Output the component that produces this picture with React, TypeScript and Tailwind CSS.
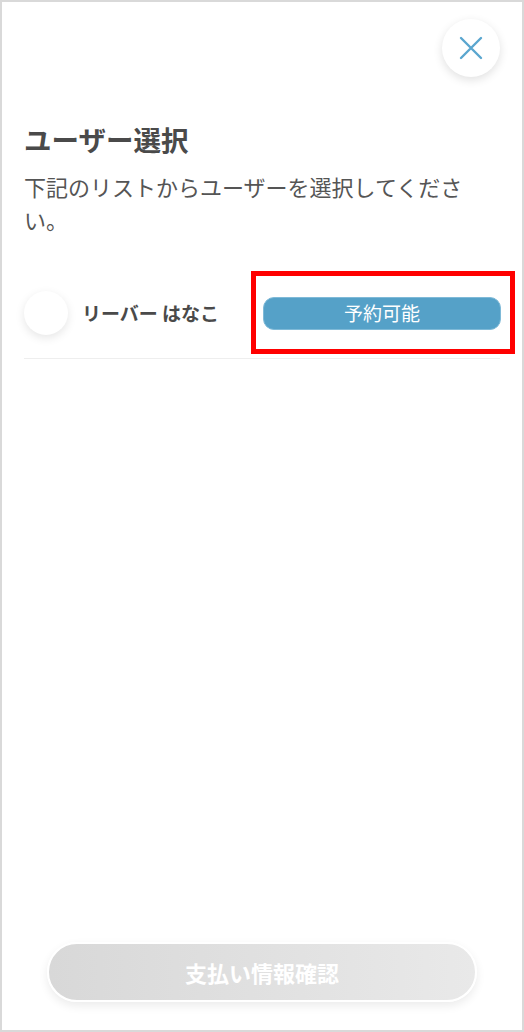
import React from 'react';

const font = { fontFamily: '"Noto Sans CJK JP", "Noto Sans", sans-serif' };

export default function App() {
  return (
    <div className="relative w-[524px] h-[1032px] bg-white border-2 border-[#d9d9d9] flex flex-col" style={font}>
      <div className="flex justify-end pt-[17px] pr-[22px]">
        <button className="w-[58px] h-[58px] rounded-full bg-white shadow-[0_3px_10px_rgba(0,0,0,0.12)] flex items-center justify-center">
          <svg width="24" height="24" viewBox="0 0 24 24" fill="none" stroke="#5aa6cf" strokeWidth="2.4" strokeLinecap="round">
            <path d="M2 2 L22 22 M22 2 L2 22" />
          </svg>
        </button>
      </div>

      <div className="px-[22px] mt-[44px]">
        <h1 className="text-[27.5px] leading-[36px] font-bold text-[#4a4a4a]">ユーザー選択</h1>
        <p className="mt-[13px] text-[22px] leading-[33px] text-[#555555]">
          下記のリストからユーザーを選択してください。
        </p>

        <div className="mt-[32px] flex items-center h-[91px] border-b border-[#eeeeee]">
          <div className="w-[44px] h-[44px] rounded-full bg-white shadow-[0_3px_10px_rgba(0,0,0,0.10)]" />
          <span className="ml-[14px] text-[19px] font-bold text-[#4a4a4a] whitespace-nowrap">リーバー はなこ</span>
          <div className="ml-auto mr-[-1px] w-[238px] h-[33px] rounded-[11px] bg-[#55a1c8] border border-[#7fbad8] flex items-center justify-center text-white text-[19px]">
            予約可能
          </div>
        </div>
      </div>

      <div className="mt-auto mb-[28px] flex justify-center">
        <button className="w-[430px] h-[60px] rounded-full bg-gradient-to-r from-[#d8d8d8] to-[#e9e9e9] border-2 border-white shadow-[0_4px_10px_rgba(0,0,0,0.08)] text-white text-[22px] font-bold">
          支払い情報確認
        </button>
      </div>

      <div className="absolute left-[249px] top-[269px] w-[264px] h-[83px] border-[5px] border-[#ff0000] pointer-events-none" />
    </div>
  );
}
